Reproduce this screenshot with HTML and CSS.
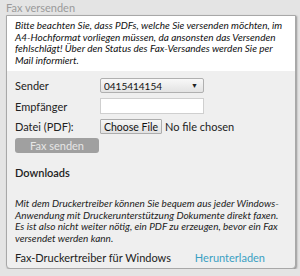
FILE: index.html
```html
<!DOCTYPE html>
<html lang="de">

<head>
  <meta charset="UTF-8">
  <meta name="viewport" content="width=device-width, initial-scale=1.0">
  <title>Fax versenden</title>
  <link rel="stylesheet" href="styles.css">
</head>

<body>
  <div class="box-title">Fax versenden</div>
  <div class="box">
    <div class="notice">
      Bitte beachten Sie, dass PDFs, welche Sie versenden möchten, im A4-Hochformat vorliegen müssen, da ansonsten das Versenden fehlschlägt! Über den Status des Fax-Versandes werden Sie per Mail informiert.
    </div>

    <form class="fax-form">
      <label for="sender">Sender</label>
      <div class="select-wrap">
        <select id="sender" name="sender">
          <option>0415414154</option>
        </select>
        <span class="arrow">&#9660;</span>
      </div>

      <label for="recipient">Empfänger</label>
      <input type="text" id="recipient" name="recipient" class="text-input">

      <label for="file">Datei (PDF):</label>
      <input type="file" id="file" name="file" class="file-input">

      <button type="submit" class="btn" disabled>Fax senden</button>
    </form>

    <div class="downloads">
      <h3>Downloads</h3>
      <p>Mit dem Druckertreiber können Sie bequem aus jeder Windows-Anwendung mit Druckerunterstützung Dokumente direkt faxen. Es ist also nicht weiter nötig, ein PDF zu erzeugen, bevor ein Fax versendet werden kann.</p>
      <div class="download-row">
        <span>Fax-Druckertreiber für Windows</span>
        <a href="#">Herunterladen</a>
      </div>
    </div>
  </div>
</body>

</html>
```

FILE: styles.css
```css
* {
  margin: 0;
  padding: 0;
  box-sizing: border-box;
}

body {
  font-family: 'Lato', 'Segoe UI', sans-serif;
  font-size: 11px;
  color: #222;
  background: #e4e4e4;
  padding: 2px 4px 0 6px;
}

.box-title {
  color: #9a9a9a;
  font-size: 11px;
  height: 13px;
  line-height: 11px;
}

.box {
  background: #efefef;
  border: 1px solid #a8a8a8;
  border-radius: 0 0 4px 4px;
  box-shadow: 1px 1px 2px rgba(0, 0, 0, 0.35);
  height: 254px;
}

.notice {
  background: #fff;
  font-style: italic;
  font-size: 10px;
  line-height: 11.5px;
  padding: 4px 8px 5px 8px;
  color: #111;
}

.fax-form {
  display: grid;
  grid-template-columns: 85px 104px;
  row-gap: 5px;
  align-items: center;
  padding: 7px 0 0 8px;
}

.fax-form label {
  font-size: 11px;
}

.select-wrap {
  position: relative;
  height: 15px;
}

.select-wrap select {
  appearance: none;
  width: 104px;
  height: 15px;
  font-family: inherit;
  font-size: 10px;
  padding-left: 3px;
  border: 1px solid #b0b0b0;
  border-radius: 2px;
  background: linear-gradient(#f8f8f8, #e3e3e3);
  color: #111;
}

.arrow {
  position: absolute;
  right: 6px;
  top: 3px;
  font-size: 7px;
  color: #222;
  pointer-events: none;
}

.text-input {
  width: 104px;
  height: 16px;
  border: 1px solid #cfcfcf;
  background: #fff;
}

.file-input {
  font-family: inherit;
  font-size: 11px;
  width: 160px;
  height: 15px;
  color: #222;
}

.file-input::file-selector-button {
  font-family: inherit;
  font-size: 10.5px;
  height: 15px;
  width: 62px;
  padding: 0;
  margin-right: 3px;
  border: 1px solid #adadad;
  border-radius: 1px;
  background: linear-gradient(#f6f6f6, #e1e1e1);
  color: #111;
}

.btn {
  grid-column: 1 / 2;
  width: 84px;
  height: 15px;
  background: #a0a0a0;
  color: #e6e6e6;
  border: none;
  border-radius: 3px;
  font-family: inherit;
  font-size: 11px;
  margin-top: -1px;
}

.downloads {
  padding: 13px 8px 0 8px;
}

.downloads h3 {
  font-size: 11px;
  font-weight: 600;
  margin-bottom: 19px;
}

.downloads p {
  font-style: italic;
  font-size: 10px;
  line-height: 11.5px;
  margin-bottom: 7px;
}

.download-row {
  display: flex;
  justify-content: space-between;
  padding-right: 22px;
}

.download-row a {
  color: #3b9fc3;
  text-decoration: none;
}
```
